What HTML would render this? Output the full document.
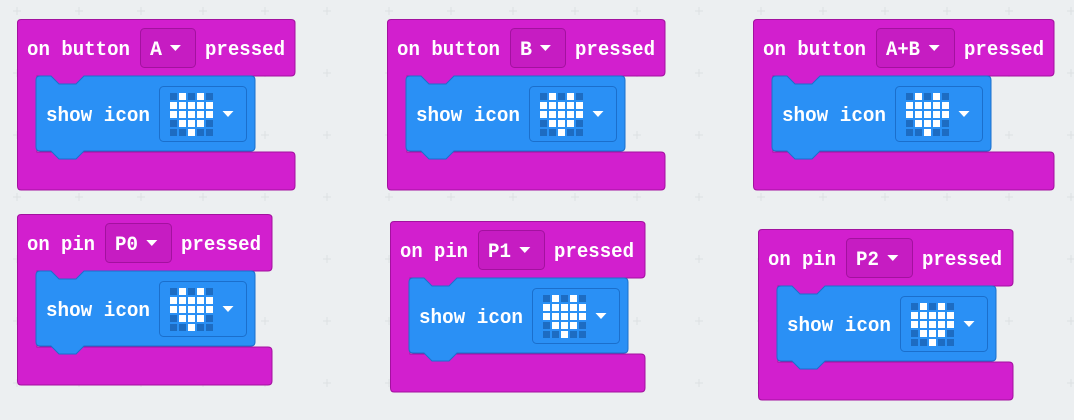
<!DOCTYPE html>
<html><head><meta charset="utf-8"><style>
html,body{margin:0;padding:0;background:#eceff1;}
svg{display:block}
text{font-family:"Liberation Mono",monospace;font-size:20px;font-weight:bold;fill:#fff;}
</style></head><body>
<svg width="1074" height="420" viewBox="0 0 1074 420" xmlns="http://www.w3.org/2000/svg">
<defs>
<pattern id="grid" width="62" height="62" patternUnits="userSpaceOnUse" x="-14" y="-20">
<path d="M31 27v8M27 31h8" stroke="#dde0e2" stroke-width="1"/>
</pattern>
<g id="blue">
<path d="M14,-1 l9,9 H40 l9,-9 Z" fill="#d21fce"/>
<path d="M4,0 H15 l8,8 H40 l8,-8 H215 Q219,0 219,4 V71 Q219,75 215,75 H48 l-8,8 H23 l-8,-8 H4 Q0,75 0,71 V4 Q0,0 4,0 Z" fill="#2a90f5" stroke="#1b6fcc" stroke-width="1"/>
<rect x="123.5" y="10.5" width="87" height="55" rx="4" fill="#2a90f5" stroke="#1b6fcc"/>
<g fill="#1d6cc2">
<rect x="134" y="17" width="7" height="7"/><rect x="152" y="17" width="7" height="7"/><rect x="170" y="17" width="7" height="7"/>
<rect x="134" y="44" width="7" height="7"/><rect x="170" y="44" width="7" height="7"/>
<rect x="134" y="53" width="7" height="7"/><rect x="143" y="53" width="7" height="7"/><rect x="161" y="53" width="7" height="7"/><rect x="170" y="53" width="7" height="7"/>
</g>
<g fill="#fff">
<rect x="143" y="17" width="7" height="7"/><rect x="161" y="17" width="7" height="7"/>
<rect x="134" y="26" width="7" height="7"/><rect x="143" y="26" width="7" height="7"/><rect x="152" y="26" width="7" height="7"/><rect x="161" y="26" width="7" height="7"/><rect x="170" y="26" width="7" height="7"/>
<rect x="134" y="35" width="7" height="7"/><rect x="143" y="35" width="7" height="7"/><rect x="152" y="35" width="7" height="7"/><rect x="161" y="35" width="7" height="7"/><rect x="170" y="35" width="7" height="7"/>
<rect x="143" y="44" width="7" height="7"/><rect x="152" y="44" width="7" height="7"/><rect x="161" y="44" width="7" height="7"/>
<rect x="152" y="53" width="7" height="7"/>
<path d="M186.5,35 h11 l-5.5,6 z"/>
</g>
</g>
</defs>
<rect width="1074" height="420" fill="url(#grid)"/>

<!-- Block 1 -->
<g transform="translate(17,19)">
<path d="M4,0.5 H274 Q278,0.5 278,4 V53 Q278,57 274,57 H20 V133 H274 Q278,133 278,137 V167 Q278,171 274,171 H4 Q0.5,171 0.5,167 V4 Q0.5,0.5 4,0.5 Z" fill="#d21fce" stroke="#a3119f"/>
<text x="10" y="36" textLength="103" lengthAdjust="spacingAndGlyphs">on button</text>
<rect x="123.5" y="9.5" width="55" height="39" rx="4" fill="#c61cc2" stroke="#a3119f"/>
<text x="133" y="36">A</text><path d="M152.9,26 h11 l-5.5,6 z" fill="#fff"/>
<text x="188" y="36" textLength="80" lengthAdjust="spacingAndGlyphs">pressed</text>
<use href="#blue" x="19" y="57"/>
<text x="29" y="102" textLength="104" lengthAdjust="spacingAndGlyphs">show icon</text>
</g>

<!-- Block 2 -->
<g transform="translate(387,19)">
<path d="M4,0.5 H274 Q278,0.5 278,4 V53 Q278,57 274,57 H20 V133 H274 Q278,133 278,137 V167 Q278,171 274,171 H4 Q0.5,171 0.5,167 V4 Q0.5,0.5 4,0.5 Z" fill="#d21fce" stroke="#a3119f"/>
<text x="10" y="36" textLength="103" lengthAdjust="spacingAndGlyphs">on button</text>
<rect x="123.5" y="9.5" width="55" height="39" rx="4" fill="#c61cc2" stroke="#a3119f"/>
<text x="133" y="36">B</text><path d="M152.9,26 h11 l-5.5,6 z" fill="#fff"/>
<text x="188" y="36" textLength="80" lengthAdjust="spacingAndGlyphs">pressed</text>
<use href="#blue" x="19" y="57"/>
<text x="29" y="102" textLength="104" lengthAdjust="spacingAndGlyphs">show icon</text>
</g>

<!-- Block 3 -->
<g transform="translate(753,19)">
<path d="M4,0.5 H297 Q301,0.5 301,4 V53 Q301,57 297,57 H20 V133 H297 Q301,133 301,137 V167 Q301,171 297,171 H4 Q0.5,171 0.5,167 V4 Q0.5,0.5 4,0.5 Z" fill="#d21fce" stroke="#a3119f"/>
<text x="10" y="36" textLength="103" lengthAdjust="spacingAndGlyphs">on button</text>
<rect x="123.5" y="9.5" width="78" height="39" rx="4" fill="#c61cc2" stroke="#a3119f"/>
<text x="133" y="36" textLength="34" lengthAdjust="spacingAndGlyphs">A+B</text><path d="M175.7,26 h11 l-5.5,6 z" fill="#fff"/>
<text x="211" y="36" textLength="80" lengthAdjust="spacingAndGlyphs">pressed</text>
<use href="#blue" x="19" y="57"/>
<text x="29" y="102" textLength="104" lengthAdjust="spacingAndGlyphs">show icon</text>
</g>

<!-- Block 4 -->
<g transform="translate(17,214)">
<path d="M4,0.5 H251 Q255,0.5 255,4 V53 Q255,57 251,57 H20 V133 H251 Q255,133 255,137 V167 Q255,171 251,171 H4 Q0.5,171 0.5,167 V4 Q0.5,0.5 4,0.5 Z" fill="#d21fce" stroke="#a3119f"/>
<text x="10" y="36" textLength="68" lengthAdjust="spacingAndGlyphs">on pin</text>
<rect x="88.5" y="9.5" width="66" height="39" rx="4" fill="#c61cc2" stroke="#a3119f"/>
<text x="98" y="36" textLength="23" lengthAdjust="spacingAndGlyphs">P0</text><path d="M129.3,26 h11 l-5.5,6 z" fill="#fff"/>
<text x="164" y="36" textLength="80" lengthAdjust="spacingAndGlyphs">pressed</text>
<use href="#blue" x="19" y="57"/>
<text x="29" y="102" textLength="104" lengthAdjust="spacingAndGlyphs">show icon</text>
</g>

<!-- Block 5 -->
<g transform="translate(390,221)">
<path d="M4,0.5 H251 Q255,0.5 255,4 V53 Q255,57 251,57 H20 V133 H251 Q255,133 255,137 V167 Q255,171 251,171 H4 Q0.5,171 0.5,167 V4 Q0.5,0.5 4,0.5 Z" fill="#d21fce" stroke="#a3119f"/>
<text x="10" y="36" textLength="68" lengthAdjust="spacingAndGlyphs">on pin</text>
<rect x="88.5" y="9.5" width="66" height="39" rx="4" fill="#c61cc2" stroke="#a3119f"/>
<text x="98" y="36" textLength="23" lengthAdjust="spacingAndGlyphs">P1</text><path d="M129.3,26 h11 l-5.5,6 z" fill="#fff"/>
<text x="164" y="36" textLength="80" lengthAdjust="spacingAndGlyphs">pressed</text>
<use href="#blue" x="19" y="57"/>
<text x="29" y="102" textLength="104" lengthAdjust="spacingAndGlyphs">show icon</text>
</g>

<!-- Block 6 -->
<g transform="translate(758,229)">
<path d="M4,0.5 H251 Q255,0.5 255,4 V53 Q255,57 251,57 H20 V133 H251 Q255,133 255,137 V167 Q255,171 251,171 H4 Q0.5,171 0.5,167 V4 Q0.5,0.5 4,0.5 Z" fill="#d21fce" stroke="#a3119f"/>
<text x="10" y="36" textLength="68" lengthAdjust="spacingAndGlyphs">on pin</text>
<rect x="88.5" y="9.5" width="66" height="39" rx="4" fill="#c61cc2" stroke="#a3119f"/>
<text x="98" y="36" textLength="23" lengthAdjust="spacingAndGlyphs">P2</text><path d="M129.3,26 h11 l-5.5,6 z" fill="#fff"/>
<text x="164" y="36" textLength="80" lengthAdjust="spacingAndGlyphs">pressed</text>
<use href="#blue" x="19" y="57"/>
<text x="29" y="102" textLength="104" lengthAdjust="spacingAndGlyphs">show icon</text>
</g>
</svg>
</body></html>
